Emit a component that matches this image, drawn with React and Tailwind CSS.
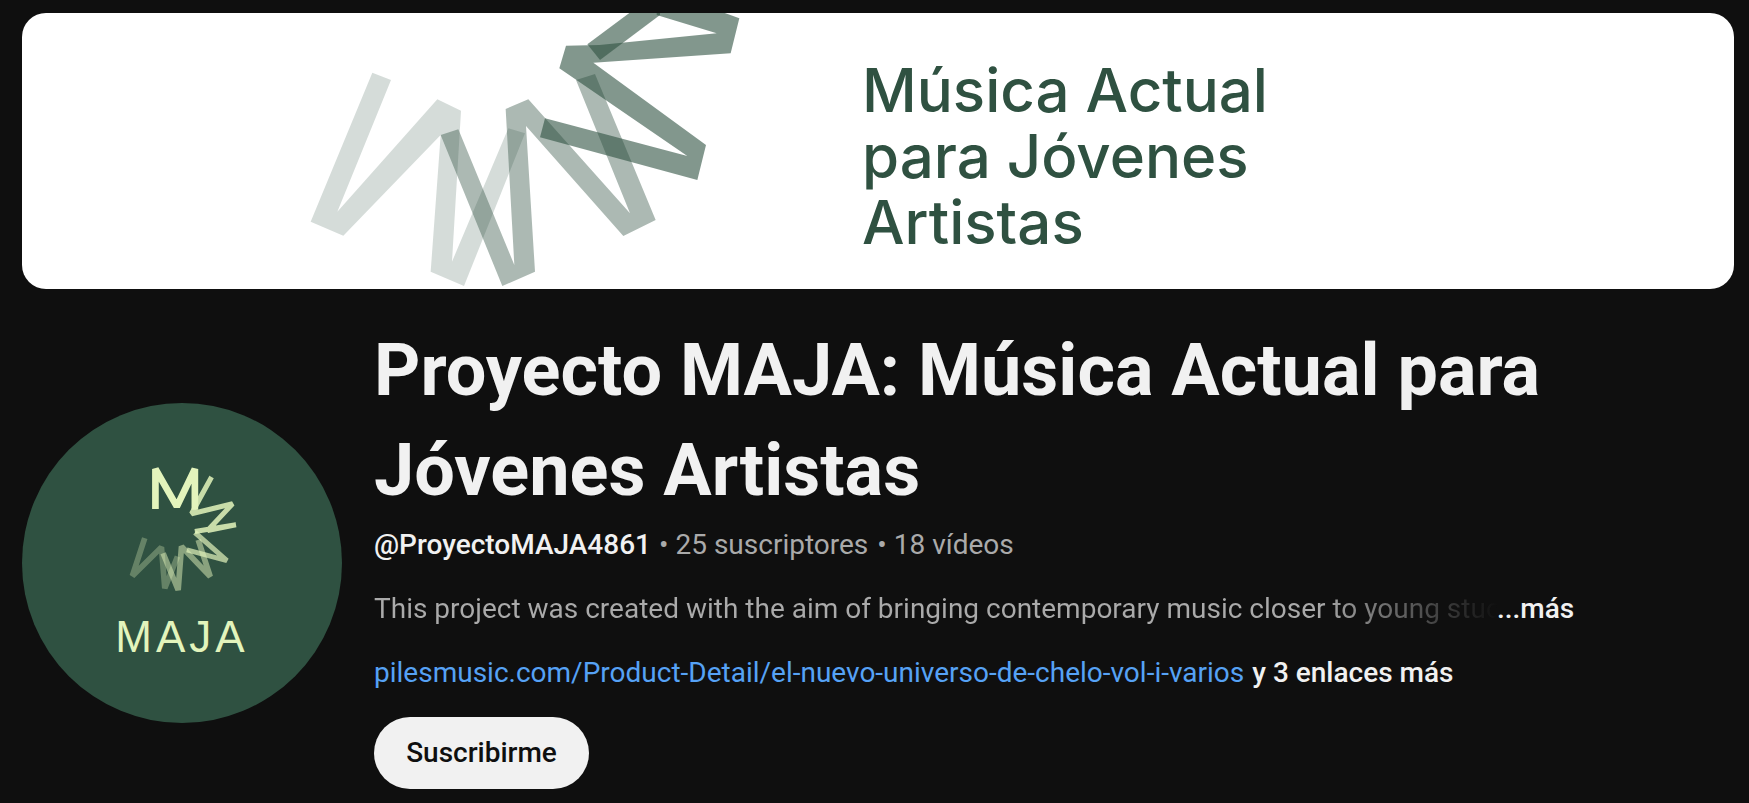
const INK = "#2f5141";

function BannerMark() {
  return (
    <svg viewBox="0 39 1500 828" className="h-[276px] w-[500px] shrink-0" style={{ filter: "blur(0.5px)" }}>
      <polygon fill={INK} fillOpacity="0.2" points="277,218 333,240 172,635 472,298 543,332 516,785 685,385 735,400 552,858 452,815 482,405 190,707 92,665" />
      <polygon fill={INK} fillOpacity="0.4" points="482,405 535,388 703,795 677,327 745,298 1050,640 888,240 945,222 1127,660 1030,708 738,378 765,815 667,858" />
      <polygon fill={INK} fillOpacity="0.6" points="780,412 795,355 1222,468 838,205 858,137 958,135 1310,100 1130,45 1130,30 1310,30 1378,55 1352,160 940,188 1278,435 1252,540" />
      <polygon fill={INK} fillOpacity="0.6" points="922,133 1060,30 1140,30 1140,45 960,180" />
    </svg>
  );
}

function AvatarMark() {
  return (
    <svg viewBox="370 220 350 395" className="h-[132px] w-[117px]" style={{ filter: "blur(0.6px)" }}>
      <g fill="none" stroke="#e3f4bc" strokeLinejoin="miter" strokeMiterlimit="2">
        <polyline strokeWidth="17" opacity="0.3" points="432,445 395,558 482,472 492,595 530,500" />
        <polyline strokeWidth="17" opacity="0.5" points="487,490 532,600 542,470 628,560 592,450" />
        <polyline strokeWidth="15" opacity="0.7" points="558,480 678,512 582,428" />
        <polyline strokeWidth="15" opacity="0.85" points="582,352 632,262 572,372 695,342 620,422 705,405 582,425" />
        <polyline strokeWidth="20" points="464,358 464,238 528,350 582,238 582,360" />
      </g>
    </svg>
  );
}

export default function App() {
  return (
    <div className="h-[803px] w-full overflow-hidden bg-[#0f0f0f] pl-[22px] pr-[15px] pt-[13px] font-['Roboto',sans-serif]">
      <div className="flex h-[276px] items-center overflow-hidden rounded-[24px] bg-white pl-[258px]">
        <BannerMark />
        <div className="ml-[82px] pt-[10px] font-['Inter',sans-serif] text-[60px] font-medium leading-[66px] text-[#2f5141]">
          <div>Música Actual</div>
          <div>para Jóvenes</div>
          <div>Artistas</div>
        </div>
      </div>
      <div className="mt-[32px] flex items-center gap-[32px]">
        <div className="flex h-[320px] w-[320px] shrink-0 flex-col items-center justify-center rounded-full bg-[#2f5141] pb-[5px]">
          <AvatarMark />
          <div className="mt-[20px] font-['Liberation_Sans',sans-serif] text-[44px] leading-[44px] tracking-[4px] text-[#e3f4bc]">
            MAJA
          </div>
        </div>
        <div className="flex min-w-0 flex-col pb-[16px]">
          <h1 className="w-[1240px] text-[72px] font-bold leading-[100px] text-[#f1f1f1]">
            Proyecto MAJA: Música Actual para Jóvenes Artistas
          </h1>
          <div className="mt-[4px] flex items-center text-[28px] leading-[40px] text-[#aaaaaa]">
            <span className="font-medium text-[#f1f1f1]">@ProyectoMAJA4861</span>
            <span className="ml-[8px]">•</span>
            <span className="ml-[7px]">25 suscriptores</span>
            <span className="ml-[9px]">•</span>
            <span className="ml-[7px]">18 vídeos</span>
          </div>
          <div className="mt-[24px] flex items-center text-[28px] leading-[40px]">
            <span className="w-[1123px] overflow-hidden whitespace-nowrap bg-[linear-gradient(to_right,#aaaaaa_84%,#0f0f0f_100%)] bg-clip-text text-transparent">
              This project was created with the aim of bringing contemporary music closer to young stuc
            </span>
            <span className="font-medium text-[#f1f1f1]">...más</span>
          </div>
          <div className="mt-[24px] flex items-center text-[28px] leading-[40px]">
            <span className="text-[#56a2f5]">pilesmusic.com/Product-Detail/el-nuevo-universo-de-chelo-vol-i-varios</span>
            <span className="ml-[8px] font-medium text-[#f1f1f1]">y 3 enlaces más</span>
          </div>
          <button className="mt-[24px] flex h-[72px] w-[215px] items-center justify-center rounded-full bg-[#f1f1f1] text-[28px] font-medium text-[#0f0f0f]">
            Suscribirme
          </button>
        </div>
      </div>
    </div>
  );
}
